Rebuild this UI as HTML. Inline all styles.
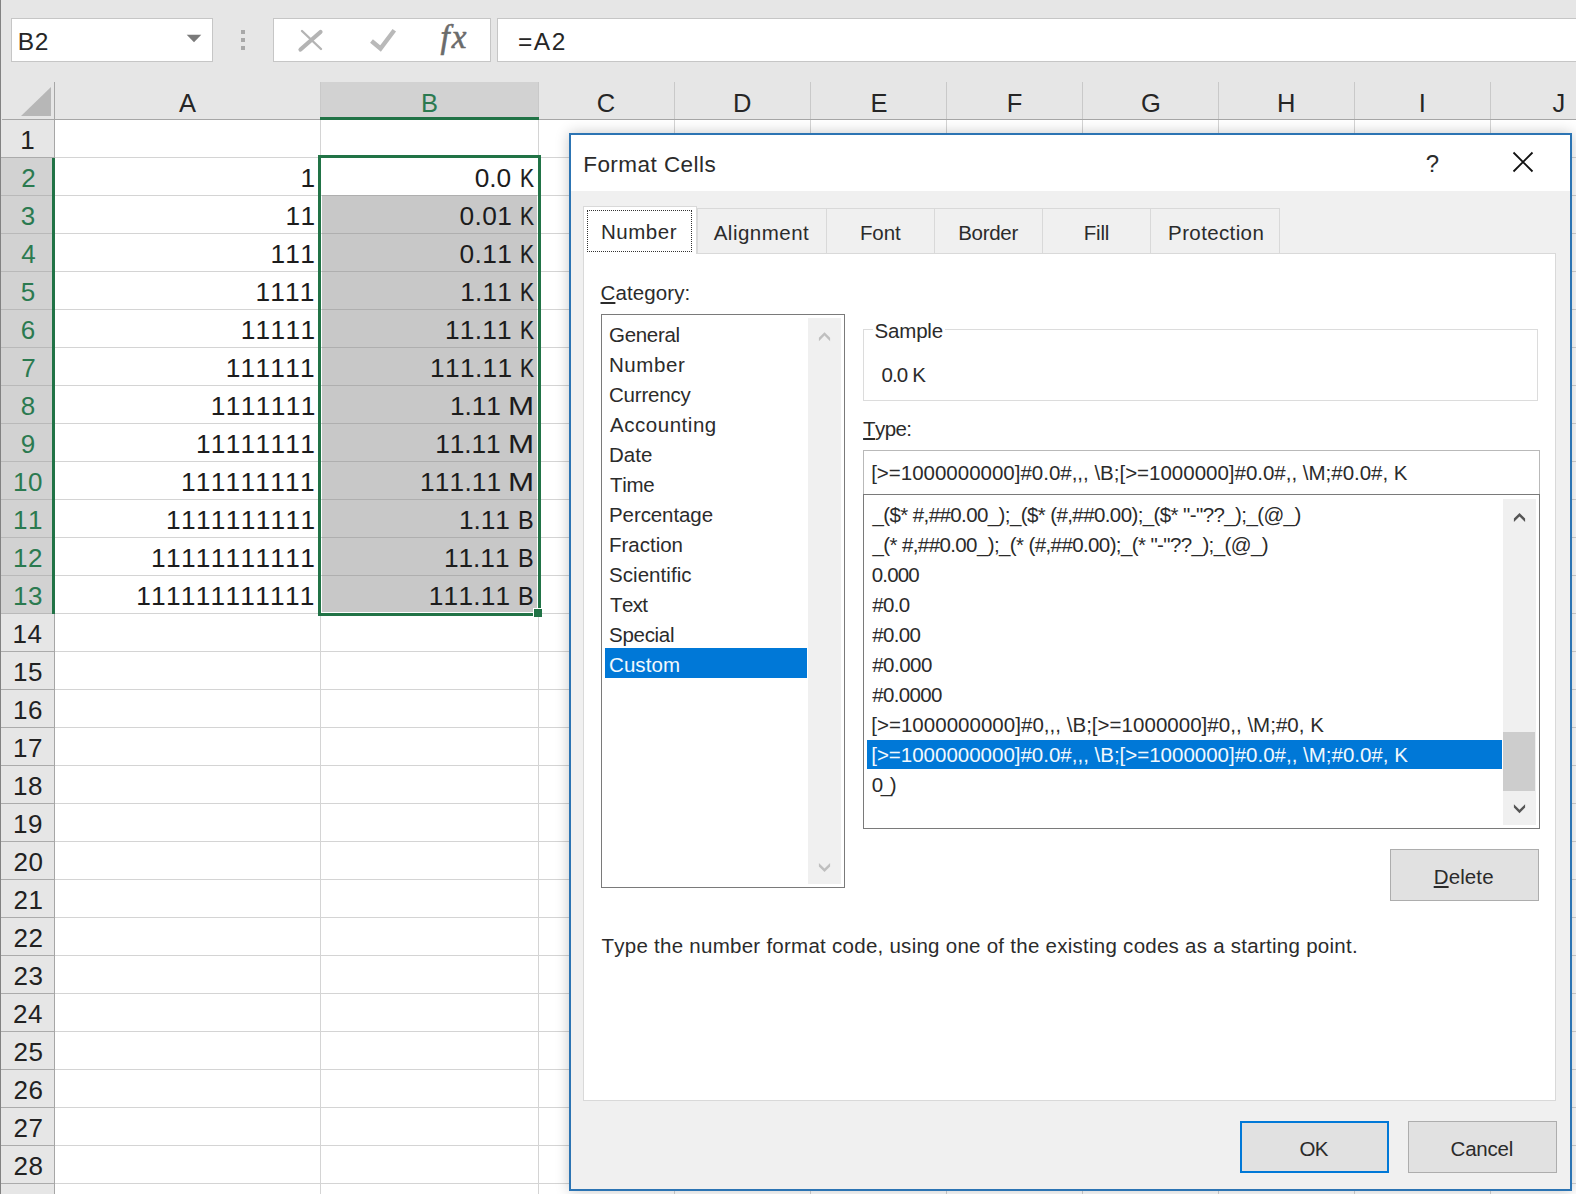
<!DOCTYPE html>
<html lang="en"><head><meta charset="utf-8"><title>Format Cells</title>
<style>
*{box-sizing:border-box;margin:0;padding:0}
html,body{width:1576px;height:1194px;overflow:hidden;background:#e6e6e6}
body{position:relative;font-family:"Liberation Sans",sans-serif;color:#000;font-kerning:none}
.a{position:absolute}
.t{position:absolute;white-space:pre}
.box{position:absolute;background:#fff;border:1px solid #c6c6c6}
.tab{position:absolute;top:208px;height:45px;background:#f0f0f0;border:1px solid #d9d9d9;border-bottom:none}
.btn{position:absolute;background:#e1e1e1;border:1px solid #adadad}
u{text-decoration:underline;text-underline-offset:2px;text-decoration-thickness:1.7px}
</style></head><body>

<div class="a" style="left:0;top:0;width:1px;height:1194px;background:#828282"></div>
<div class="box" style="left:11px;top:18px;width:202px;height:44px"></div>
<div class="t" style="left:17.80px;top:25px;font-size:24.5px;line-height:34px;letter-spacing:0.600px;color:#262626;">B2</div>
<svg class="a" style="left:186px;top:34px" width="16" height="9" viewBox="0 0 16 9"><path d="M0.7 0.8h14.6L8 8.3z" fill="#7a7a7a"/></svg>
<div class="a" style="left:241px;top:30px;width:4px;height:4px;background:#a8a8a8"></div>
<div class="a" style="left:241px;top:38px;width:4px;height:4px;background:#a8a8a8"></div>
<div class="a" style="left:241px;top:46px;width:4px;height:4px;background:#a8a8a8"></div>
<div class="box" style="left:273px;top:18px;width:218px;height:44px"></div>
<svg class="a" style="left:296px;top:25px" width="30" height="30" viewBox="0 0 30 30"><path d="M4.5 24.5L24.5 7" stroke="#b4b4b4" stroke-width="4.2" fill="none" stroke-linecap="round"/><path d="M6 6L25 24" stroke="#b4b4b4" stroke-width="2.4" fill="none" stroke-linecap="round"/></svg>
<svg class="a" style="left:366px;top:25px" width="32" height="30" viewBox="0 0 32 30"><path d="M5.5 16L14.5 23.5L28.3 5.2" stroke="#b9b9b9" stroke-width="4.4" fill="none" stroke-linecap="butt" stroke-linejoin="miter"/></svg>
<div class="t" style="left:440.40px;top:14px;font-size:33px;line-height:46px;letter-spacing:2.100px;color:#6b6b6b;font-family:'Liberation Serif',serif;font-style:italic;-webkit-text-stroke:0.6px #6b6b6b;">fx</div>
<div class="box" style="left:497px;top:18px;width:1100px;height:44px"></div>
<div class="t" style="left:518.00px;top:25px;font-size:24.5px;line-height:34px;letter-spacing:1.500px;color:#262626;">=A2</div>
<div class="a" style="left:55px;top:120px;width:1521px;height:1074px;background:#fff"></div>
<svg class="a" style="left:20px;top:86px" width="32" height="31" viewBox="0 0 32 31"><path d="M31 1V30H1z" fill="#b7b7b7"/></svg>
<div class="a" style="left:321px;top:82px;width:217px;height:38px;background:#d2d2d2;border-bottom:2px solid #217346"></div>
<div class="t" style="left:179.00px;top:85px;font-size:25.5px;line-height:36px;letter-spacing:0.000px;color:#262626;">A</div>
<div class="a" style="left:320px;top:82px;width:1px;height:37px;background:#c9c9c9"></div>
<div class="t" style="left:421.05px;top:85px;font-size:25.5px;line-height:36px;letter-spacing:0.000px;color:#2b7a50;">B</div>
<div class="a" style="left:538px;top:82px;width:1px;height:37px;background:#c9c9c9"></div>
<div class="t" style="left:596.80px;top:85px;font-size:25.5px;line-height:36px;letter-spacing:0.000px;color:#262626;">C</div>
<div class="a" style="left:674px;top:82px;width:1px;height:37px;background:#c9c9c9"></div>
<div class="t" style="left:733.10px;top:85px;font-size:25.5px;line-height:36px;letter-spacing:0.000px;color:#262626;">D</div>
<div class="a" style="left:810px;top:82px;width:1px;height:37px;background:#c9c9c9"></div>
<div class="t" style="left:870.45px;top:85px;font-size:25.5px;line-height:36px;letter-spacing:0.000px;color:#262626;">E</div>
<div class="a" style="left:946px;top:82px;width:1px;height:37px;background:#c9c9c9"></div>
<div class="t" style="left:1006.70px;top:85px;font-size:25.5px;line-height:36px;letter-spacing:0.000px;color:#262626;">F</div>
<div class="a" style="left:1082px;top:82px;width:1px;height:37px;background:#c9c9c9"></div>
<div class="t" style="left:1141.05px;top:85px;font-size:25.5px;line-height:36px;letter-spacing:0.000px;color:#262626;">G</div>
<div class="a" style="left:1218px;top:82px;width:1px;height:37px;background:#c9c9c9"></div>
<div class="t" style="left:1276.90px;top:85px;font-size:25.5px;line-height:36px;letter-spacing:0.000px;color:#262626;">H</div>
<div class="a" style="left:1354px;top:82px;width:1px;height:37px;background:#c9c9c9"></div>
<div class="t" style="left:1418.65px;top:85px;font-size:25.5px;line-height:36px;letter-spacing:0.000px;color:#262626;">I</div>
<div class="a" style="left:1490px;top:82px;width:1px;height:37px;background:#c9c9c9"></div>
<div class="t" style="left:1552.55px;top:85px;font-size:25.5px;line-height:36px;letter-spacing:0.000px;color:#262626;">J</div>
<div class="a" style="left:1626px;top:82px;width:1px;height:37px;background:#c9c9c9"></div>
<div class="a" style="left:54px;top:82px;width:1px;height:1112px;background:#a6a6a6"></div>
<div class="a" style="left:2px;top:119px;width:1574px;height:1px;background:#a6a6a6"></div>
<div class="a" style="left:320px;top:117px;width:219px;height:3px;background:#217346"></div>
<div class="a" style="left:1px;top:158px;width:53px;height:456px;background:#d2d2d2"></div>
<div class="t" style="left:20.30px;top:122px;font-size:26px;line-height:36px;letter-spacing:0.000px;color:#222;">1</div>
<div class="a" style="left:1px;top:157px;width:53px;height:1px;background:#ababab"></div>
<div class="a" style="left:55px;top:157px;width:1521px;height:1px;background:#d4d4d4"></div>
<div class="t" style="left:21.30px;top:160px;font-size:26px;line-height:36px;letter-spacing:0.000px;color:#2b7a50;">2</div>
<div class="a" style="left:1px;top:195px;width:53px;height:1px;background:#b9b9b9"></div>
<div class="a" style="left:55px;top:195px;width:1521px;height:1px;background:#d4d4d4"></div>
<div class="t" style="left:20.80px;top:198px;font-size:26px;line-height:36px;letter-spacing:0.000px;color:#2b7a50;">3</div>
<div class="a" style="left:1px;top:233px;width:53px;height:1px;background:#b9b9b9"></div>
<div class="a" style="left:55px;top:233px;width:1521px;height:1px;background:#d4d4d4"></div>
<div class="t" style="left:21.30px;top:236px;font-size:26px;line-height:36px;letter-spacing:0.000px;color:#2b7a50;">4</div>
<div class="a" style="left:1px;top:271px;width:53px;height:1px;background:#b9b9b9"></div>
<div class="a" style="left:55px;top:271px;width:1521px;height:1px;background:#d4d4d4"></div>
<div class="t" style="left:20.80px;top:274px;font-size:26px;line-height:36px;letter-spacing:0.000px;color:#2b7a50;">5</div>
<div class="a" style="left:1px;top:309px;width:53px;height:1px;background:#b9b9b9"></div>
<div class="a" style="left:55px;top:309px;width:1521px;height:1px;background:#d4d4d4"></div>
<div class="t" style="left:20.80px;top:312px;font-size:26px;line-height:36px;letter-spacing:0.000px;color:#2b7a50;">6</div>
<div class="a" style="left:1px;top:347px;width:53px;height:1px;background:#b9b9b9"></div>
<div class="a" style="left:55px;top:347px;width:1521px;height:1px;background:#d4d4d4"></div>
<div class="t" style="left:21.30px;top:350px;font-size:26px;line-height:36px;letter-spacing:0.000px;color:#2b7a50;">7</div>
<div class="a" style="left:1px;top:385px;width:53px;height:1px;background:#b9b9b9"></div>
<div class="a" style="left:55px;top:385px;width:1521px;height:1px;background:#d4d4d4"></div>
<div class="t" style="left:20.80px;top:388px;font-size:26px;line-height:36px;letter-spacing:0.000px;color:#2b7a50;">8</div>
<div class="a" style="left:1px;top:423px;width:53px;height:1px;background:#b9b9b9"></div>
<div class="a" style="left:55px;top:423px;width:1521px;height:1px;background:#d4d4d4"></div>
<div class="t" style="left:20.80px;top:426px;font-size:26px;line-height:36px;letter-spacing:0.000px;color:#2b7a50;">9</div>
<div class="a" style="left:1px;top:461px;width:53px;height:1px;background:#b9b9b9"></div>
<div class="a" style="left:55px;top:461px;width:1521px;height:1px;background:#d4d4d4"></div>
<div class="t" style="left:13.08px;top:464px;font-size:26px;line-height:36px;letter-spacing:0.450px;color:#2b7a50;">10</div>
<div class="a" style="left:1px;top:499px;width:53px;height:1px;background:#b9b9b9"></div>
<div class="a" style="left:55px;top:499px;width:1521px;height:1px;background:#d4d4d4"></div>
<div class="t" style="left:13.08px;top:502px;font-size:26px;line-height:36px;letter-spacing:0.450px;color:#2b7a50;">11</div>
<div class="a" style="left:1px;top:537px;width:53px;height:1px;background:#b9b9b9"></div>
<div class="a" style="left:55px;top:537px;width:1521px;height:1px;background:#d4d4d4"></div>
<div class="t" style="left:13.08px;top:540px;font-size:26px;line-height:36px;letter-spacing:0.450px;color:#2b7a50;">12</div>
<div class="a" style="left:1px;top:575px;width:53px;height:1px;background:#b9b9b9"></div>
<div class="a" style="left:55px;top:575px;width:1521px;height:1px;background:#d4d4d4"></div>
<div class="t" style="left:13.08px;top:578px;font-size:26px;line-height:36px;letter-spacing:0.450px;color:#2b7a50;">13</div>
<div class="a" style="left:1px;top:613px;width:53px;height:1px;background:#b9b9b9"></div>
<div class="a" style="left:55px;top:613px;width:1521px;height:1px;background:#d4d4d4"></div>
<div class="t" style="left:12.58px;top:616px;font-size:26px;line-height:36px;letter-spacing:0.450px;color:#222;">14</div>
<div class="a" style="left:1px;top:651px;width:53px;height:1px;background:#ababab"></div>
<div class="a" style="left:55px;top:651px;width:1521px;height:1px;background:#d4d4d4"></div>
<div class="t" style="left:13.08px;top:654px;font-size:26px;line-height:36px;letter-spacing:0.450px;color:#222;">15</div>
<div class="a" style="left:1px;top:689px;width:53px;height:1px;background:#ababab"></div>
<div class="a" style="left:55px;top:689px;width:1521px;height:1px;background:#d4d4d4"></div>
<div class="t" style="left:13.08px;top:692px;font-size:26px;line-height:36px;letter-spacing:0.450px;color:#222;">16</div>
<div class="a" style="left:1px;top:727px;width:53px;height:1px;background:#ababab"></div>
<div class="a" style="left:55px;top:727px;width:1521px;height:1px;background:#d4d4d4"></div>
<div class="t" style="left:13.08px;top:730px;font-size:26px;line-height:36px;letter-spacing:0.450px;color:#222;">17</div>
<div class="a" style="left:1px;top:765px;width:53px;height:1px;background:#ababab"></div>
<div class="a" style="left:55px;top:765px;width:1521px;height:1px;background:#d4d4d4"></div>
<div class="t" style="left:13.08px;top:768px;font-size:26px;line-height:36px;letter-spacing:0.450px;color:#222;">18</div>
<div class="a" style="left:1px;top:803px;width:53px;height:1px;background:#ababab"></div>
<div class="a" style="left:55px;top:803px;width:1521px;height:1px;background:#d4d4d4"></div>
<div class="t" style="left:13.08px;top:806px;font-size:26px;line-height:36px;letter-spacing:0.450px;color:#222;">19</div>
<div class="a" style="left:1px;top:841px;width:53px;height:1px;background:#ababab"></div>
<div class="a" style="left:55px;top:841px;width:1521px;height:1px;background:#d4d4d4"></div>
<div class="t" style="left:13.58px;top:844px;font-size:26px;line-height:36px;letter-spacing:0.450px;color:#222;">20</div>
<div class="a" style="left:1px;top:879px;width:53px;height:1px;background:#ababab"></div>
<div class="a" style="left:55px;top:879px;width:1521px;height:1px;background:#d4d4d4"></div>
<div class="t" style="left:13.58px;top:882px;font-size:26px;line-height:36px;letter-spacing:0.450px;color:#222;">21</div>
<div class="a" style="left:1px;top:917px;width:53px;height:1px;background:#ababab"></div>
<div class="a" style="left:55px;top:917px;width:1521px;height:1px;background:#d4d4d4"></div>
<div class="t" style="left:13.58px;top:920px;font-size:26px;line-height:36px;letter-spacing:0.450px;color:#222;">22</div>
<div class="a" style="left:1px;top:955px;width:53px;height:1px;background:#ababab"></div>
<div class="a" style="left:55px;top:955px;width:1521px;height:1px;background:#d4d4d4"></div>
<div class="t" style="left:13.58px;top:958px;font-size:26px;line-height:36px;letter-spacing:0.450px;color:#222;">23</div>
<div class="a" style="left:1px;top:993px;width:53px;height:1px;background:#ababab"></div>
<div class="a" style="left:55px;top:993px;width:1521px;height:1px;background:#d4d4d4"></div>
<div class="t" style="left:13.08px;top:996px;font-size:26px;line-height:36px;letter-spacing:0.450px;color:#222;">24</div>
<div class="a" style="left:1px;top:1031px;width:53px;height:1px;background:#ababab"></div>
<div class="a" style="left:55px;top:1031px;width:1521px;height:1px;background:#d4d4d4"></div>
<div class="t" style="left:13.58px;top:1034px;font-size:26px;line-height:36px;letter-spacing:0.450px;color:#222;">25</div>
<div class="a" style="left:1px;top:1069px;width:53px;height:1px;background:#ababab"></div>
<div class="a" style="left:55px;top:1069px;width:1521px;height:1px;background:#d4d4d4"></div>
<div class="t" style="left:13.58px;top:1072px;font-size:26px;line-height:36px;letter-spacing:0.450px;color:#222;">26</div>
<div class="a" style="left:1px;top:1107px;width:53px;height:1px;background:#ababab"></div>
<div class="a" style="left:55px;top:1107px;width:1521px;height:1px;background:#d4d4d4"></div>
<div class="t" style="left:13.58px;top:1110px;font-size:26px;line-height:36px;letter-spacing:0.450px;color:#222;">27</div>
<div class="a" style="left:1px;top:1145px;width:53px;height:1px;background:#ababab"></div>
<div class="a" style="left:55px;top:1145px;width:1521px;height:1px;background:#d4d4d4"></div>
<div class="t" style="left:13.58px;top:1148px;font-size:26px;line-height:36px;letter-spacing:0.450px;color:#222;">28</div>
<div class="a" style="left:1px;top:1183px;width:53px;height:1px;background:#ababab"></div>
<div class="a" style="left:55px;top:1183px;width:1521px;height:1px;background:#d4d4d4"></div>
<div class="t" style="left:13.58px;top:1186px;font-size:26px;line-height:36px;letter-spacing:0.450px;color:#222;">29</div>
<div class="a" style="left:1px;top:1221px;width:53px;height:1px;background:#ababab"></div>
<div class="a" style="left:55px;top:1221px;width:1521px;height:1px;background:#d4d4d4"></div>
<div class="a" style="left:320px;top:120px;width:1px;height:1074px;background:#d4d4d4"></div>
<div class="a" style="left:538px;top:120px;width:1px;height:1074px;background:#d4d4d4"></div>
<div class="a" style="left:674px;top:120px;width:1px;height:1074px;background:#d4d4d4"></div>
<div class="a" style="left:810px;top:120px;width:1px;height:1074px;background:#d4d4d4"></div>
<div class="a" style="left:946px;top:120px;width:1px;height:1074px;background:#d4d4d4"></div>
<div class="a" style="left:1082px;top:120px;width:1px;height:1074px;background:#d4d4d4"></div>
<div class="a" style="left:1218px;top:120px;width:1px;height:1074px;background:#d4d4d4"></div>
<div class="a" style="left:1354px;top:120px;width:1px;height:1074px;background:#d4d4d4"></div>
<div class="a" style="left:1490px;top:120px;width:1px;height:1074px;background:#d4d4d4"></div>
<div class="a" style="left:52px;top:158px;width:3px;height:456px;background:#217346"></div>
<div class="a" style="left:322px;top:195px;width:215px;height:417px;background:#c8c8c8"></div>
<div class="a" style="left:322px;top:195px;width:215px;height:1px;background:#afafaf"></div>
<div class="a" style="left:322px;top:233px;width:215px;height:1px;background:#afafaf"></div>
<div class="a" style="left:322px;top:271px;width:215px;height:1px;background:#afafaf"></div>
<div class="a" style="left:322px;top:309px;width:215px;height:1px;background:#afafaf"></div>
<div class="a" style="left:322px;top:347px;width:215px;height:1px;background:#afafaf"></div>
<div class="a" style="left:322px;top:385px;width:215px;height:1px;background:#afafaf"></div>
<div class="a" style="left:322px;top:423px;width:215px;height:1px;background:#afafaf"></div>
<div class="a" style="left:322px;top:461px;width:215px;height:1px;background:#afafaf"></div>
<div class="a" style="left:322px;top:499px;width:215px;height:1px;background:#afafaf"></div>
<div class="a" style="left:322px;top:537px;width:215px;height:1px;background:#afafaf"></div>
<div class="a" style="left:322px;top:575px;width:215px;height:1px;background:#afafaf"></div>
<div class="t" style="left:300.40px;top:160px;font-size:26.3px;line-height:37px;letter-spacing:0.000px;color:#1c1c1c;">1</div>
<div class="t" style="left:474.70px;top:160px;font-size:26.3px;line-height:37px;letter-spacing:-0.050px;color:#1c1c1c;">0.0 </div>
<div class="t" style="left:519.70px;top:160px;font-size:26.3px;line-height:37px;color:#1c1c1c;transform:scaleX(0.800);transform-origin:0 0;-webkit-text-stroke:0.18px #1c1c1c">K</div>
<div class="t" style="left:285.47px;top:198px;font-size:26.3px;line-height:37px;letter-spacing:0.430px;color:#1c1c1c;">11</div>
<div class="t" style="left:459.60px;top:198px;font-size:26.3px;line-height:37px;letter-spacing:0.400px;color:#1c1c1c;">0.01 </div>
<div class="t" style="left:519.70px;top:198px;font-size:26.3px;line-height:37px;color:#1c1c1c;transform:scaleX(0.800);transform-origin:0 0;-webkit-text-stroke:0.18px #1c1c1c">K</div>
<div class="t" style="left:270.54px;top:236px;font-size:26.3px;line-height:37px;letter-spacing:0.180px;color:#1c1c1c;">111</div>
<div class="t" style="left:459.60px;top:236px;font-size:26.3px;line-height:37px;letter-spacing:0.400px;color:#1c1c1c;">0.11 </div>
<div class="t" style="left:519.70px;top:236px;font-size:26.3px;line-height:37px;color:#1c1c1c;transform:scaleX(0.800);transform-origin:0 0;-webkit-text-stroke:0.18px #1c1c1c">K</div>
<div class="t" style="left:255.61px;top:274px;font-size:26.3px;line-height:37px;letter-spacing:0.097px;color:#1c1c1c;">1111</div>
<div class="t" style="left:460.30px;top:274px;font-size:26.3px;line-height:37px;letter-spacing:0.167px;color:#1c1c1c;">1.11 </div>
<div class="t" style="left:519.70px;top:274px;font-size:26.3px;line-height:37px;color:#1c1c1c;transform:scaleX(0.800);transform-origin:0 0;-webkit-text-stroke:0.18px #1c1c1c">K</div>
<div class="t" style="left:240.68px;top:312px;font-size:26.3px;line-height:37px;letter-spacing:0.305px;color:#1c1c1c;">11111</div>
<div class="t" style="left:445.00px;top:312px;font-size:26.3px;line-height:37px;letter-spacing:0.200px;color:#1c1c1c;">11.11 </div>
<div class="t" style="left:519.70px;top:312px;font-size:26.3px;line-height:37px;color:#1c1c1c;transform:scaleX(0.800);transform-origin:0 0;-webkit-text-stroke:0.18px #1c1c1c">K</div>
<div class="t" style="left:225.75px;top:350px;font-size:26.3px;line-height:37px;letter-spacing:0.230px;color:#1c1c1c;">111111</div>
<div class="t" style="left:430.00px;top:350px;font-size:26.3px;line-height:37px;letter-spacing:0.360px;color:#1c1c1c;">111.11 </div>
<div class="t" style="left:519.70px;top:350px;font-size:26.3px;line-height:37px;color:#1c1c1c;transform:scaleX(0.800);transform-origin:0 0;-webkit-text-stroke:0.18px #1c1c1c">K</div>
<div class="t" style="left:210.82px;top:388px;font-size:26.3px;line-height:37px;letter-spacing:0.347px;color:#1c1c1c;">1111111</div>
<div class="t" style="left:450.00px;top:388px;font-size:26.3px;line-height:37px;letter-spacing:-0.067px;color:#1c1c1c;">1.11 </div>
<div class="t" style="left:508.22px;top:388px;font-size:26.3px;line-height:37px;color:#1c1c1c;transform:scaleX(1.189);transform-origin:0 0;-webkit-text-stroke:0.00px #1c1c1c">M</div>
<div class="t" style="left:195.89px;top:426px;font-size:26.3px;line-height:37px;letter-spacing:0.287px;color:#1c1c1c;">11111111</div>
<div class="t" style="left:435.30px;top:426px;font-size:26.3px;line-height:37px;letter-spacing:-0.125px;color:#1c1c1c;">11.11 </div>
<div class="t" style="left:508.22px;top:426px;font-size:26.3px;line-height:37px;color:#1c1c1c;transform:scaleX(1.189);transform-origin:0 0;-webkit-text-stroke:0.00px #1c1c1c">M</div>
<div class="t" style="left:180.96px;top:464px;font-size:26.3px;line-height:37px;letter-spacing:0.242px;color:#1c1c1c;">111111111</div>
<div class="t" style="left:420.10px;top:464px;font-size:26.3px;line-height:37px;letter-spacing:0.140px;color:#1c1c1c;">111.11 </div>
<div class="t" style="left:508.22px;top:464px;font-size:26.3px;line-height:37px;color:#1c1c1c;transform:scaleX(1.189);transform-origin:0 0;-webkit-text-stroke:0.00px #1c1c1c">M</div>
<div class="t" style="left:166.03px;top:502px;font-size:26.3px;line-height:37px;letter-spacing:0.319px;color:#1c1c1c;">1111111111</div>
<div class="t" style="left:459.00px;top:502px;font-size:26.3px;line-height:37px;letter-spacing:-0.067px;color:#1c1c1c;">1.11 </div>
<div class="t" style="left:518.41px;top:502px;font-size:26.3px;line-height:37px;color:#1c1c1c;transform:scaleX(0.893);transform-origin:0 0;-webkit-text-stroke:0.10px #1c1c1c">B</div>
<div class="t" style="left:151.10px;top:540px;font-size:26.3px;line-height:37px;letter-spacing:0.280px;color:#1c1c1c;">11111111111</div>
<div class="t" style="left:443.90px;top:540px;font-size:26.3px;line-height:37px;letter-spacing:-0.025px;color:#1c1c1c;">11.11 </div>
<div class="t" style="left:518.41px;top:540px;font-size:26.3px;line-height:37px;color:#1c1c1c;transform:scaleX(0.893);transform-origin:0 0;-webkit-text-stroke:0.10px #1c1c1c">B</div>
<div class="t" style="left:136.17px;top:578px;font-size:26.3px;line-height:37px;letter-spacing:0.248px;color:#1c1c1c;">111111111111</div>
<div class="t" style="left:428.70px;top:578px;font-size:26.3px;line-height:37px;letter-spacing:0.220px;color:#1c1c1c;">111.11 </div>
<div class="t" style="left:518.41px;top:578px;font-size:26.3px;line-height:37px;color:#1c1c1c;transform:scaleX(0.893);transform-origin:0 0;-webkit-text-stroke:0.10px #1c1c1c">B</div>
<div class="a" style="left:318px;top:155px;width:223px;height:461px;border:3px solid #217346"></div>
<div class="a" style="left:533px;top:608px;width:9px;height:9px;background:#fff"></div>
<div class="a" style="left:534px;top:609px;width:8px;height:8px;background:#217346"></div>
<div class="a" style="left:569px;top:133px;width:1003px;height:1058px;background:#f0f0f0;border:2px solid #2c74b3;box-shadow:0 0 13px rgba(0,0,0,.22)"></div>
<div class="a" style="left:571px;top:135px;width:999px;height:56px;background:#fff"></div>
<div class="t" style="left:583.20px;top:149px;font-size:22.5px;line-height:31px;letter-spacing:0.455px;color:#2b2b2b;">Format Cells</div>
<div class="t" style="left:1425.80px;top:147px;font-size:24px;line-height:34px;letter-spacing:0.000px;color:#2b2b2b;">?</div>
<svg class="a" style="left:1512px;top:151px" width="22" height="22" viewBox="0 0 22 22"><path d="M1.5 1.5L20.5 20.5M20.5 1.5L1.5 20.5" stroke="#111" stroke-width="1.8" fill="none"/></svg>
<div class="a" style="left:583px;top:253px;width:973px;height:848px;background:#fff;border:1px solid #d9d9d9"></div>
<div class="tab" style="left:697px;width:130px"></div>
<div class="t" style="left:713.70px;top:218px;font-size:20.5px;line-height:29px;letter-spacing:0.487px;color:#2b2b2b;">Alignment</div>
<div class="tab" style="left:826px;width:109px"></div>
<div class="t" style="left:859.90px;top:218px;font-size:20.5px;line-height:29px;letter-spacing:-0.067px;color:#2b2b2b;">Font</div>
<div class="tab" style="left:934px;width:109px"></div>
<div class="t" style="left:958.20px;top:218px;font-size:20.5px;line-height:29px;letter-spacing:-0.280px;color:#2b2b2b;">Border</div>
<div class="tab" style="left:1042px;width:109px"></div>
<div class="t" style="left:1083.80px;top:218px;font-size:20.5px;line-height:29px;letter-spacing:-0.200px;color:#2b2b2b;">Fill</div>
<div class="tab" style="left:1150px;width:130px"></div>
<div class="t" style="left:1168.10px;top:218px;font-size:20.5px;line-height:29px;letter-spacing:0.378px;color:#2b2b2b;">Protection</div>
<div class="tab" style="left:583px;width:114px;top:206px;height:48px;background:#fff"></div>
<div class="a" style="left:587px;top:210px;width:105px;height:42px;border:1px dotted #333"></div>
<div class="t" style="left:601.00px;top:217px;font-size:20.5px;line-height:29px;letter-spacing:0.520px;color:#2b2b2b;">Number</div>
<div class="t" style="left:600.50px;top:278px;font-size:20.5px;line-height:29px;letter-spacing:0.100px;color:#2b2b2b;"><u>C</u>ategory:</div>
<div class="a" style="left:601px;top:314px;width:244px;height:574px;background:#fff;border:1px solid #7a7a7a"></div>
<div class="a" style="left:808px;top:318px;width:33px;height:566px;background:#f0f0f0"></div>
<svg class="a" style="left:817px;top:331px" width="16" height="13" viewBox="0 0 16 13"><polygon points="7.5,1.2 13.1,6.8 13.1,10.2 7.5,4.6 1.9,10.2 1.9,6.8" fill="#bfbfbf"/></svg>
<svg class="a" style="left:817px;top:862px" width="16" height="13" viewBox="0 0 16 13"><polygon points="1.9,1.0 7.5,6.6 13.1,1.0 13.1,4.4 7.5,10.0 1.9,4.4" fill="#bfbfbf"/></svg>
<div class="a" style="left:605px;top:648px;width:202px;height:30px;background:#0078d7"></div>
<div class="t" style="left:609.00px;top:320px;font-size:20.5px;line-height:29px;letter-spacing:-0.300px;color:#2b2b2b;">General</div>
<div class="t" style="left:609.00px;top:350px;font-size:20.5px;line-height:29px;letter-spacing:0.560px;color:#2b2b2b;">Number</div>
<div class="t" style="left:609.00px;top:380px;font-size:20.5px;line-height:29px;letter-spacing:-0.214px;color:#2b2b2b;">Currency</div>
<div class="t" style="left:610.00px;top:410px;font-size:20.5px;line-height:29px;letter-spacing:0.533px;color:#2b2b2b;">Accounting</div>
<div class="t" style="left:609.00px;top:440px;font-size:20.5px;line-height:29px;letter-spacing:0.000px;color:#2b2b2b;">Date</div>
<div class="t" style="left:610.00px;top:470px;font-size:20.5px;line-height:29px;letter-spacing:-0.333px;color:#2b2b2b;">Time</div>
<div class="t" style="left:609.00px;top:500px;font-size:20.5px;line-height:29px;letter-spacing:-0.089px;color:#2b2b2b;">Percentage</div>
<div class="t" style="left:609.00px;top:530px;font-size:20.5px;line-height:29px;letter-spacing:-0.014px;color:#2b2b2b;">Fraction</div>
<div class="t" style="left:609.00px;top:560px;font-size:20.5px;line-height:29px;letter-spacing:0.056px;color:#2b2b2b;">Scientific</div>
<div class="t" style="left:610.00px;top:590px;font-size:20.5px;line-height:29px;letter-spacing:-0.600px;color:#2b2b2b;">Text</div>
<div class="t" style="left:609.00px;top:620px;font-size:20.5px;line-height:29px;letter-spacing:-0.283px;color:#2b2b2b;">Special</div>
<div class="t" style="left:609.00px;top:650px;font-size:20.5px;line-height:29px;letter-spacing:0.080px;color:#f2f8fd;">Custom</div>
<div class="a" style="left:863px;top:329px;width:675px;height:72px;border:1px solid #dcdcdc"></div>
<div class="a" style="left:873px;top:329px;width:72px;height:1px;background:#fff"></div>
<div class="t" style="left:874.60px;top:316px;font-size:20.5px;line-height:29px;letter-spacing:-0.200px;color:#2b2b2b;">Sample</div>
<div class="t" style="left:881.40px;top:360px;font-size:20.5px;line-height:29px;letter-spacing:-0.825px;color:#2b2b2b;">0.0 K</div>
<div class="t" style="left:863.10px;top:414px;font-size:20.5px;line-height:29px;letter-spacing:-0.575px;color:#2b2b2b;"><u>T</u>ype:</div>
<div class="a" style="left:863px;top:450px;width:677px;height:45px;background:#fff;border:1px solid #b9b9b9;border-bottom:none"></div>
<div class="t" style="left:871.20px;top:458px;font-size:20.5px;line-height:29px;letter-spacing:-0.009px;color:#2b2b2b;">[&gt;=1000000000]#0.0#,,, \B;[&gt;=1000000]#0.0#,, \M;#0.0#, K</div>
<div class="a" style="left:863px;top:494px;width:677px;height:335px;background:#fff;border:1px solid #7a7a7a"></div>
<div class="a" style="left:1503px;top:499px;width:33px;height:326px;background:#f0f0f0"></div>
<div class="a" style="left:1503px;top:732px;width:32px;height:59px;background:#cdcdcd"></div>
<svg class="a" style="left:1512px;top:512px" width="16" height="13" viewBox="0 0 16 13"><polygon points="7.5,1.0 13.1,6.6 13.1,10.0 7.5,4.4 1.9,10.0 1.9,6.6" fill="#555"/></svg>
<svg class="a" style="left:1512px;top:803px" width="16" height="13" viewBox="0 0 16 13"><polygon points="1.9,1.2 7.5,6.8 13.1,1.2 13.1,4.6 7.5,10.2 1.9,4.6" fill="#555"/></svg>
<div class="a" style="left:867px;top:739.5px;width:635px;height:29.5px;background:#0078d7"></div>
<div class="t" style="left:872.50px;top:500px;font-size:20.5px;line-height:29px;letter-spacing:-0.600px;color:#2b2b2b;">_($* #,##0.00_);_($* (#,##0.00);_($* "-"??_);_(@_)</div>
<div class="t" style="left:872.50px;top:530px;font-size:20.5px;line-height:29px;letter-spacing:-0.607px;color:#2b2b2b;">_(* #,##0.00_);_(* (#,##0.00);_(* "-"??_);_(@_)</div>
<div class="t" style="left:871.70px;top:560px;font-size:20.5px;line-height:29px;letter-spacing:-0.825px;color:#2b2b2b;">0.000</div>
<div class="t" style="left:872.20px;top:590px;font-size:20.5px;line-height:29px;letter-spacing:-0.667px;color:#2b2b2b;">#0.0</div>
<div class="t" style="left:872.20px;top:620px;font-size:20.5px;line-height:29px;letter-spacing:-0.625px;color:#2b2b2b;">#0.00</div>
<div class="t" style="left:872.20px;top:650px;font-size:20.5px;line-height:29px;letter-spacing:-0.520px;color:#2b2b2b;">#0.000</div>
<div class="t" style="left:872.20px;top:680px;font-size:20.5px;line-height:29px;letter-spacing:-0.667px;color:#2b2b2b;">#0.0000</div>
<div class="t" style="left:871.20px;top:710px;font-size:20.5px;line-height:29px;letter-spacing:0.030px;color:#2b2b2b;">[&gt;=1000000000]#0,,, \B;[&gt;=1000000]#0,, \M;#0, K</div>
<div class="t" style="left:871.20px;top:740px;font-size:20.5px;line-height:29px;letter-spacing:-0.004px;color:#f2f8fd;">[&gt;=1000000000]#0.0#,,, \B;[&gt;=1000000]#0.0#,, \M;#0.0#, K</div>
<div class="t" style="left:871.70px;top:770px;font-size:20.5px;line-height:29px;letter-spacing:-2.350px;color:#2b2b2b;">0_)</div>
<div class="btn" style="left:1390px;top:849px;width:149px;height:52px"></div>
<div class="t" style="left:1433.70px;top:862px;font-size:20.5px;line-height:29px;letter-spacing:0.120px;color:#2b2b2b;"><u>D</u>elete</div>
<div class="t" style="left:601.50px;top:931px;font-size:20.5px;line-height:29px;letter-spacing:0.264px;color:#2b2b2b;">Type the number format code, using one of the existing codes as a starting point.</div>
<div class="btn" style="left:1240px;top:1121px;width:149px;height:52px;border:2px solid #0078d7"></div>
<div class="t" style="left:1299.60px;top:1134px;font-size:20.5px;line-height:29px;letter-spacing:-0.700px;color:#2b2b2b;">OK</div>
<div class="btn" style="left:1408px;top:1121px;width:149px;height:52px"></div>
<div class="t" style="left:1450.60px;top:1134px;font-size:20.5px;line-height:29px;letter-spacing:-0.220px;color:#2b2b2b;">Cancel</div>
</body></html>
